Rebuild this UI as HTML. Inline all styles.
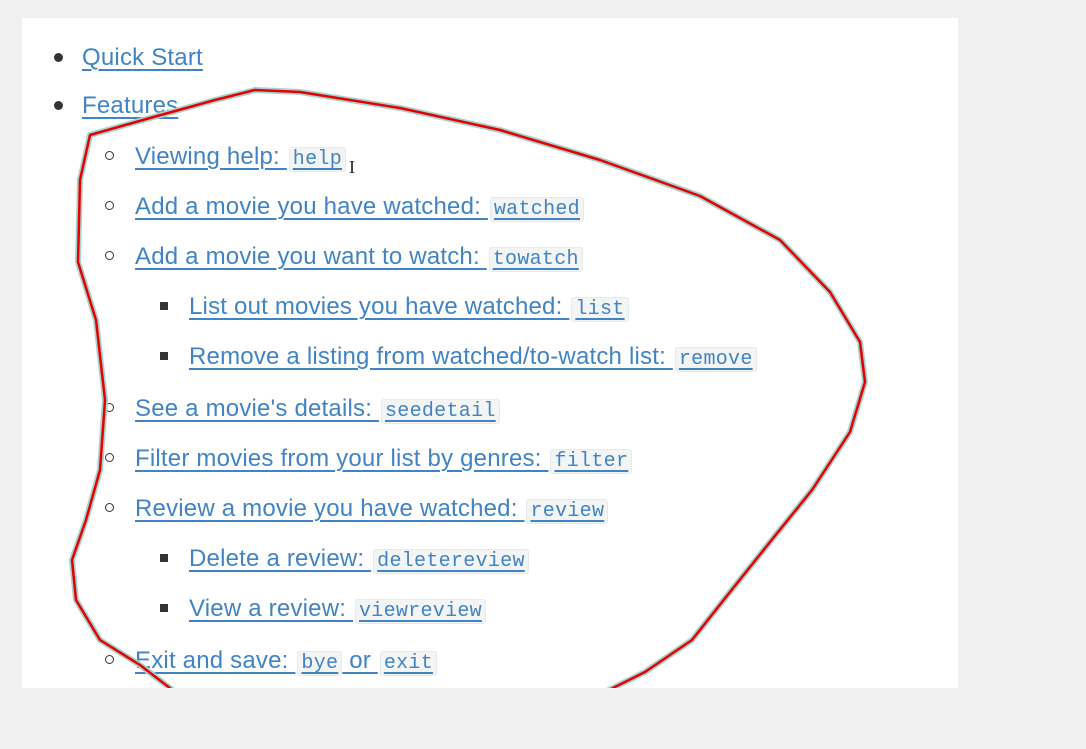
<!DOCTYPE html>
<html><head><meta charset="utf-8"><style>
body{margin:0;width:1086px;height:749px;background:#f0f0f0;position:relative;overflow:hidden;font-family:"Liberation Sans",sans-serif}
.panel{position:absolute;left:22px;top:18px;width:936px;height:670px;background:#fff}
.l{position:absolute;font-size:24px;letter-spacing:0.2px;line-height:30px;color:#4183c4;white-space:nowrap;text-decoration:underline;text-underline-offset:4px;text-decoration-thickness:2px}
code{font-family:"Liberation Mono",monospace;font-size:20px;letter-spacing:0.3px;background:#f3f4f4;border:1px solid #e7eaed;border-radius:3px;padding:0 3px;margin-left:2px}
.b{position:absolute}
.d{width:9px;height:9px;border-radius:50%;background:#333}
.c{width:7px;height:7px;border-radius:50%;border:1.5px solid #333}
.s{width:8px;height:8px;background:#333}
</style></head><body>
<div class="panel"></div>
<div class="b d" style="left:54px;top:53px"></div><div class="l" style="left:82px;top:43px">Quick Start</div>
<div class="b d" style="left:54px;top:101px"></div><div class="l" style="left:82px;top:91px">Features</div>
<div class="b c" style="left:105px;top:151px"></div><div class="l" style="left:135px;top:142px">Viewing help: <code>help</code></div>
<div class="b c" style="left:105px;top:201px"></div><div class="l" style="left:135px;top:192px">Add a movie you have watched: <code>watched</code></div>
<div class="b c" style="left:105px;top:251px"></div><div class="l" style="left:135px;top:242px">Add a movie you want to watch: <code>towatch</code></div>
<div class="b s" style="left:160px;top:302px"></div><div class="l" style="left:189px;top:292px">List out movies you have watched: <code>list</code></div>
<div class="b s" style="left:160px;top:352px"></div><div class="l" style="left:189px;top:342px">Remove a listing from watched/to-watch list: <code>remove</code></div>
<div class="b c" style="left:105px;top:403px"></div><div class="l" style="left:135px;top:394px">See a movie's details: <code>seedetail</code></div>
<div class="b c" style="left:105px;top:453px"></div><div class="l" style="left:135px;top:444px">Filter movies from your list by genres: <code>filter</code></div>
<div class="b c" style="left:105px;top:503px"></div><div class="l" style="left:135px;top:494px">Review a movie you have watched: <code>review</code></div>
<div class="b s" style="left:160px;top:554px"></div><div class="l" style="left:189px;top:544px">Delete a review: <code>deletereview</code></div>
<div class="b s" style="left:160px;top:604px"></div><div class="l" style="left:189px;top:594px">View a review: <code>viewreview</code></div>
<div class="b c" style="left:105px;top:655px"></div><div class="l" style="left:135px;top:646px">Exit and save: <code>bye</code> or <code>exit</code></div>
<svg width="1086" height="749" style="position:absolute;left:0;top:0">
<clipPath id="cp"><rect x="22" y="18" width="936" height="670"/></clipPath>
<g clip-path="url(#cp)" fill="none" stroke-linejoin="round">
<path d="M175,692 L140,665 L100,640 L76,600 L72,560 L86,520 L100,470 L105,400 L96,320 L78,262 L80,180 L90,135 L150,118 L215,100 L255,90 L300,92 L400,108 L500,130 L600,160 L700,196 L780,240 L830,292 L860,342 L865,382 L850,432 L812,490 L770,542 L730,592 L692,640 L645,672 L605,692" stroke="#a8d0cc" stroke-width="6"/>
<path d="M175,692 L140,665 L100,640 L76,600 L72,560 L86,520 L100,470 L105,400 L96,320 L78,262 L80,180 L90,135 L150,118 L215,100 L255,90 L300,92 L400,108 L500,130 L600,160 L700,196 L780,240 L830,292 L860,342 L865,382 L850,432 L812,490 L770,542 L730,592 L692,640 L645,672 L605,692" stroke="#e60000" stroke-width="2.5"/>
</g></svg>
<div style="position:absolute;left:349px;top:157px;font-size:18px;color:#222;font-family:'Liberation Serif',serif">I</div>
</body></html>
